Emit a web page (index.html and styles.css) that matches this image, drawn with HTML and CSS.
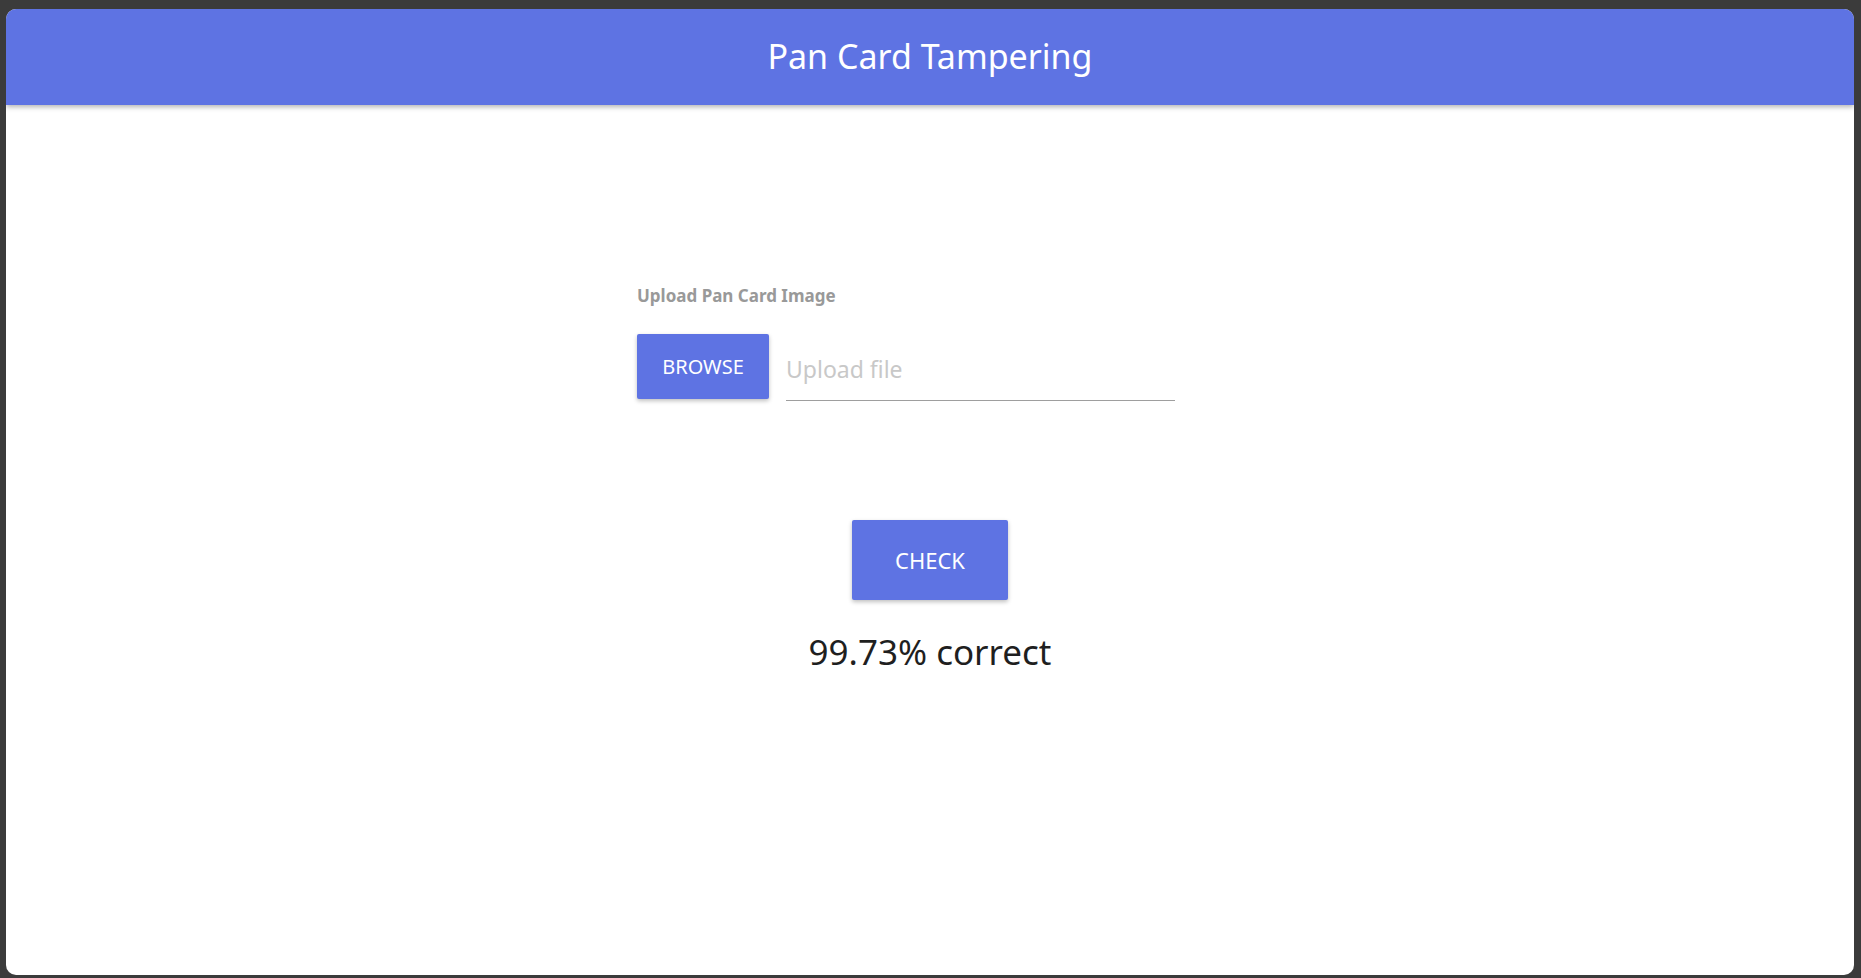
FILE: index.html
```html
<!DOCTYPE html>
<html>
<head>
<meta charset="utf-8">
<link rel="stylesheet" href="styles.css">
<title>Pan Card Tampering</title>
</head>
<body>
<div class="window">
  <header class="appbar">
    <h1 class="title">Pan Card Tampering</h1>
  </header>
  <main class="content">
    <form class="upload-form">
      <label class="field-label">Upload Pan Card Image</label>
      <div class="file-row">
        <button type="button" class="btn btn-browse">BROWSE</button>
        <div class="file-input"><span class="placeholder">Upload file</span></div>
      </div>
    </form>
    <button type="button" class="btn btn-check">CHECK</button>
    <p class="result">99.73% correct</p>
  </main>
</div>
</body>
</html>
```
FILE: styles.css
```css
html, body {
  margin: 0;
  padding: 0;
  background: #3b3b3b;
  height: 100%;
}
body {
  font-family: "Noto Sans", "Open Sans", sans-serif;
  padding: 9px 7px 3px 6px;
  box-sizing: border-box;
}
.window {
  height: 966px;
  background: #ffffff;
  border-radius: 10px;
  overflow: hidden;
  display: flex;
  flex-direction: column;
}
.appbar {
  height: 96px;
  background: #5e73e3;
  display: flex;
  align-items: center;
  justify-content: center;
  box-shadow: 0 2px 5px rgba(0,0,0,0.3);
  position: relative;
  z-index: 1;
}
.title {
  margin: 0 0 2px;
  color: #ffffff;
  font-weight: 400;
  font-size: 34px;
}
.content {
  display: flex;
  flex-direction: column;
  align-items: center;
}
.upload-form {
  width: 586px;
  margin-top: 180px;
  display: flex;
  flex-direction: column;
}
.field-label {
  color: #999999;
  font-weight: 700;
  font-size: 17px;
  line-height: 22px;
}
.file-row {
  display: flex;
  align-items: flex-start;
  margin-top: 27px;
}
.btn {
  border: none;
  background: #5e73e3;
  color: #ffffff;
  font-family: "Noto Sans", "Open Sans", sans-serif;
  border-radius: 2px;
  box-shadow: 0 2px 4px rgba(0,0,0,0.25);
  cursor: pointer;
  padding: 0;
}
.btn-browse {
  width: 132px;
  height: 65px;
  font-size: 20px;
}
.file-input {
  width: 389px;
  margin-left: 17px;
  border-bottom: 1px solid #9e9e9e;
  height: 67px;
  box-sizing: border-box;
  display: flex;
  align-items: center;
  padding-top: 3px;
}
.placeholder {
  color: #c8c8c8;
  font-size: 23px;
}
.btn-check {
  width: 156px;
  height: 80px;
  margin-top: 119px;
  font-size: 22px;
}
.result {
  margin: 30px 0 0;
  font-size: 35px;
  color: #1f1f1f;
  line-height: 44px;
}
```
